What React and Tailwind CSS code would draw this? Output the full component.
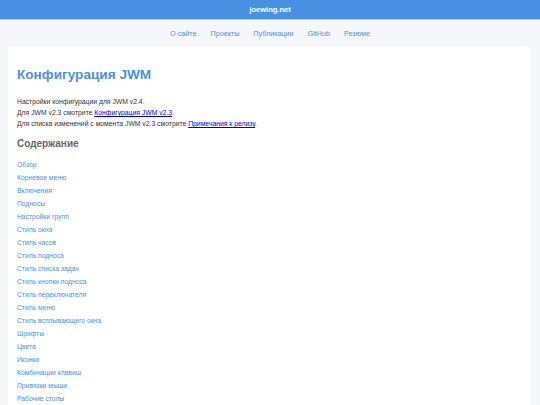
export default function App() {
  const toc = [
    "Обзор",
    "Корневое меню",
    "Включения",
    "Подносы",
    "Настройки групп",
    "Стиль окна",
    "Стиль часов",
    "Стиль подноса",
    "Стиль списка задач",
    "Стиль кнопки подноса",
    "Стиль переключателя",
    "Стиль меню",
    "Стиль всплывающего окна",
    "Шрифты",
    "Цвета",
    "Иконки",
    "Комбинации клавиш",
    "Привязки мыши",
    "Рабочие столы",
  ];
  const nav = ["О сайте", "Проекты", "Публикации", "GitHub", "Резюме"];
  return (
    <div
      className="h-[405px] overflow-hidden bg-[#f5f7fb]"
      style={{ fontFamily: '"Liberation Sans", Arial, sans-serif' }}
    >
      <header className="h-[20px] bg-[#4a90e2] border-b border-[#a9cdf4] flex items-center justify-center">
        <span className="text-white font-bold text-[7.5px] leading-none">joewing.net</span>
      </header>
      <nav className="h-[26px] flex items-center justify-center gap-[14px] pt-[1px]">
        {nav.map((n) => (
          <a key={n} className="text-[#4a90e2] text-[7.2px] leading-none">
            {n}
          </a>
        ))}
      </nav>
      <main className="ml-[8px] mr-[9px] bg-white rounded-[4px] shadow-[0_0_2px_rgba(0,0,0,0.06)] px-[9px] pt-[19px] pb-4">
        <h1 className="text-[#4a90e2] font-bold text-[13.6px] leading-[20px]">Конфигурация JWM</h1>
        <div className="mt-[11px] text-[6.8px] leading-[11px] text-[#333]">
          <p>Настройки конфигурации для JWM v2.4.</p>
          <p>
            Для JWM v2.3 смотрите <a className="text-[#0000ee] underline">Конфигурация JWM v2.3</a>.
          </p>
          <p>
            Для списка изменений с момента JWM v2.3 смотрите{" "}
            <a className="text-[#0000ee] underline">Примечания к релизу</a>.
          </p>
        </div>
        <h2 className="mt-[8px] text-[#666] font-bold text-[10px] leading-[14px]">Содержание</h2>
        <ul className="mt-[7px] flex flex-col">
          {toc.map((t) => (
            <li key={t} className="text-[#4a90e2] text-[6.75px] leading-[13px]">
              {t}
            </li>
          ))}
        </ul>
      </main>
    </div>
  );
}
